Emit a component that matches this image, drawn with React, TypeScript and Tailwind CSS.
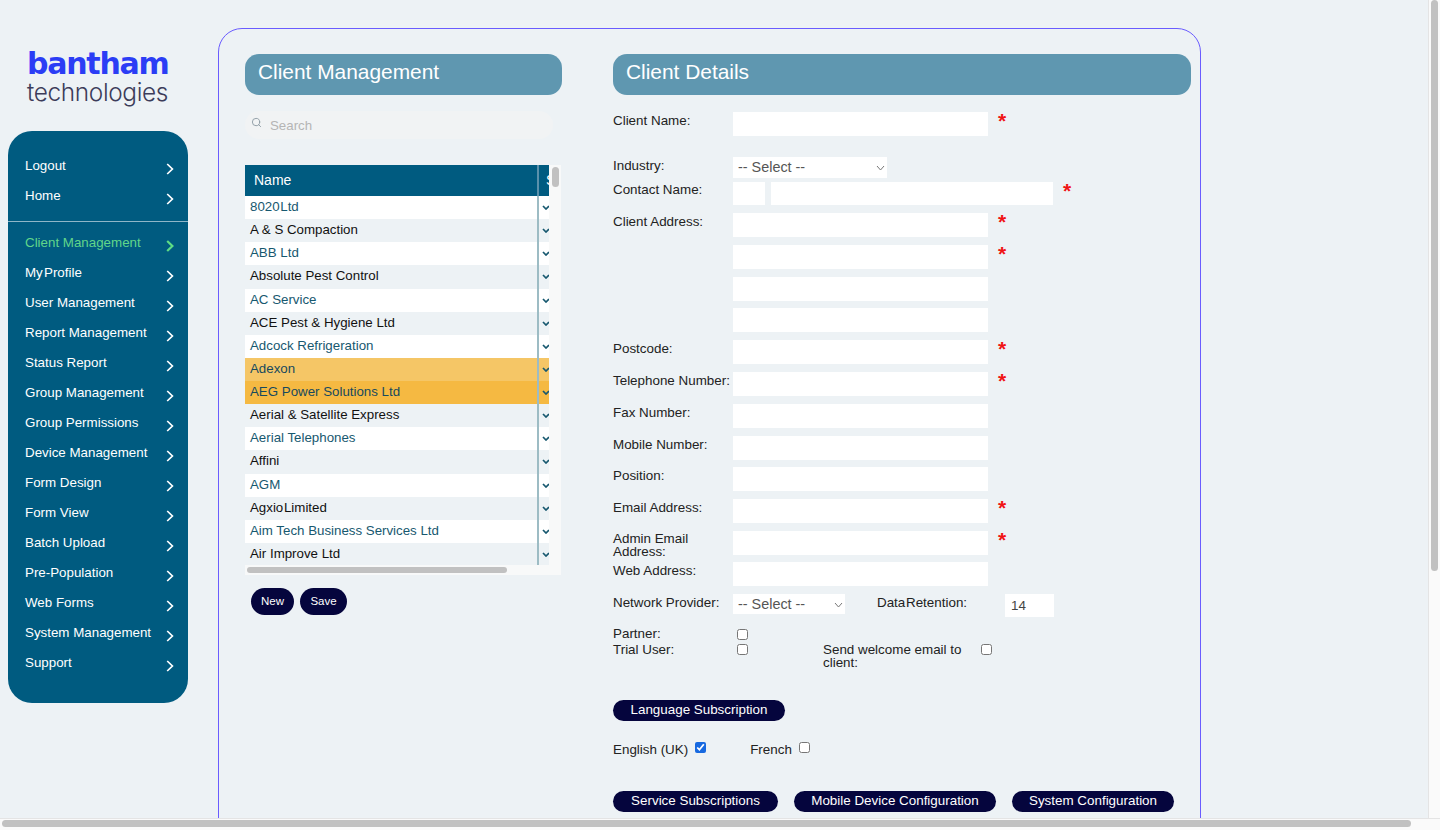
import React from "react";
import { Search } from "lucide-react";

const font = "font-['Liberation_Sans',Arial,sans-serif]";

const topNav = ["Logout", "Home"];
const nav = ["Client Management", "My Profile", "User Management", "Report Management", "Status Report", "Group Management", "Group Permissions", "Device Management", "Form Design", "Form View", "Batch Upload", "Pre-Population", "Web Forms", "System Management", "Support"];
const clients = ["8020 Ltd", "A & S Compaction", "ABB Ltd", "Absolute Pest Control", "AC Service", "ACE Pest & Hygiene Ltd", "Adcock Refrigeration", "Adexon", "AEG Power Solutions Ltd", "Aerial & Satellite Express", "Aerial Telephones", "Affini", "AGM", "Agxio Limited", "Aim Tech Business Services Ltd", "Air Improve Ltd"];

function Chevron({ green, top }: { green?: boolean; top?: boolean }) {
  return (
    <svg width="8" height="12" viewBox="0 0 8 12" fill="none" stroke={green ? "#5fdc84" : "#ffffff"} strokeWidth={green ? 2.2 : 1.7} className={`${top ? "mt-[5px]" : "mt-[3px]"} mr-[14px] shrink-0`}>
      <path d="M1.2 1 L6.4 6 L1.2 11" />
    </svg>
  );
}

function NavItem({ label, active, top }: { label: string; active?: boolean; top?: boolean }) {
  const tight = label === "My Profile";
  return (
    <div className={`flex h-[30px] items-center justify-between pl-[17px] text-[13.35px] ${active ? "text-[#61d68a]" : "text-white"} ${tight ? "[word-spacing:-2.5px]" : ""}`}>
      <span className={top ? "mt-[1px]" : "-mt-[2px]"}>{label}</span>
      <Chevron green={active} top={top} />
    </div>
  );
}

function Sidebar() {
  return (
    <aside className="w-[218px] shrink-0 pl-[8px]">
      <div className="mt-[49px] h-[56px] pl-[19px]">
        <div className="h-[30px] text-[30px] leading-[30px] font-bold tracking-[-1.25px] text-[#2b3df5] font-['DejaVu_Sans',sans-serif]">bantham</div>
        <div className="h-[26px] text-[24.4px] leading-[26px] font-light tracking-[-0.35px] text-[#3c3c5a] font-['Inter',sans-serif]">technologies</div>
      </div>
      <nav className="mt-[26px] h-[572px] w-[180px] rounded-[24px] bg-[#005b80] pt-[20px]">
        {topNav.map((n) => <NavItem key={n} label={n} top />)}
        <div className="mt-[10px] mb-[7px] h-px bg-[#8fb6c8]" />
        {nav.map((n, i) => <NavItem key={n} label={n} active={i === 0} />)}
      </nav>
    </aside>
  );
}

function Heading({ children, className }: { children: React.ReactNode; className: string }) {
  return (
    <div className={`flex h-[41px] items-center rounded-[14px] bg-[#5f97b0] pl-[13px] text-[20.9px] text-white ${className}`}>
      <span className="-mt-[5px]">{children}</span>
    </div>
  );
}

function ClientRow({ name, i }: { name: string; i: number }) {
  const bg = name === "Adexon" ? "bg-[#f5c666] text-[#17495e]" : name.startsWith("AEG") ? "bg-[#f5b942] text-[#17495e]" : i % 2 === 0 ? "bg-white text-[#17586f]" : "bg-[#edf2f5] text-[#111111]";
  const tight = name === "8020 Ltd" || name === "Agxio Limited";
  return (
    <div className={`flex h-[23.13px] text-[13.3px] ${bg}`}>
      <div className={`w-[292px] shrink-0 truncate pl-[5px] leading-[22px] ${tight ? "[word-spacing:-3px]" : ""}`}>{name}</div>
      <div className="w-[2px] shrink-0 bg-[#9dbcc4]" />
      <div className="flex flex-1 justify-end overflow-hidden pt-[9px]">
        <svg width="8" height="5" viewBox="0 0 8 5" fill="none" stroke="#17586f" strokeWidth="1.7" className="-mr-[1px] shrink-0"><path d="M1 1 L4 4 L7 1" /></svg>
      </div>
    </div>
  );
}

function ClientList() {
  return (
    <section className="w-[317px] shrink-0">
      <Heading className="w-[317px]">Client Management</Heading>
      <div className="mt-[16px] flex h-[28px] w-[308px] items-center rounded-full bg-[#f1f3f4] pl-[6px] text-[13.3px] text-[#b5b5b5]">
        <Search size={11} strokeWidth={2} className="-mt-[5px] text-[#8c9aa3]" />
        <span className="mt-[1px] ml-[8px]">Search</span>
      </div>
      <div className="mt-[26px] flex h-[410px] w-[316px] flex-col bg-[#f8f9f9]">
        <div className="flex flex-1 overflow-hidden">
          <div className="w-[304px] shrink-0">
            <div className="flex h-[31px] bg-[#005b80] text-[14px] text-white">
              <div className="w-[292px] shrink-0 pl-[9px] leading-[30px]">Name</div>
              <div className="w-[2px] shrink-0 bg-[#5b91ab]" />
              <div className="flex-1 overflow-hidden pl-[7px] leading-[30px]">S</div>
            </div>
            {clients.map((c, i) => <ClientRow key={c} name={c} i={i} />)}
          </div>
          <div className="ml-[3px] mt-[2px] h-[20px] w-[7px] rounded-full bg-[#c1c1c1]" />
        </div>
        <div className="mb-[2px] ml-[2px] mt-[2px] h-[6px] w-[260px] rounded-full bg-[#c1c1c1]" />
      </div>
      <div className="mt-[13px] flex gap-[6px] pl-[6px]">
        <button className="h-[27px] w-[43px] rounded-full bg-[#05053d] text-[11.5px] text-white">New</button>
        <button className="h-[27px] w-[47px] rounded-full bg-[#05053d] text-[11.5px] text-white">Save</button>
      </div>
    </section>
  );
}

function Star() {
  return <span className="ml-[10px] h-[24px] text-[21px] leading-[18px] font-bold text-[#f01414]">*</span>;
}

function Select({ className }: { className: string }) {
  return (
    <div className={`relative bg-white ${className}`}>
      <select className="h-full w-full appearance-none pl-[5px] text-[14.4px] text-[#555555] outline-none">
        <option>-- Select --</option>
      </select>
      <svg width="9" height="6" viewBox="0 0 9 6" fill="none" stroke="#777777" strokeWidth="1" className="pointer-events-none absolute top-[8px] right-[2px]"><path d="M1 1 L4.5 5 L8 1" /></svg>
    </div>
  );
}

function Field({ label, star, className }: { label?: string; star?: boolean; className: string }) {
  return (
    <div className={`flex h-[24px] text-[#222222] ${className}`}>
      <label className="w-[120px] shrink-0 leading-[17px] whitespace-nowrap">{label}</label>
      <input className="h-[24px] w-[255px] bg-white outline-none" />
      {star && <Star />}
    </div>
  );
}

function PillButton({ children, className }: { children: React.ReactNode; className: string }) {
  return <button className={`h-[21px] rounded-full bg-[#05053d] text-[13.4px] text-white ${className}`}>{children}</button>;
}

function Box({ checked, className }: { checked?: boolean; className?: string }) {
  return <input type="checkbox" defaultChecked={checked} className={`m-0 h-[11px] w-[11px] shrink-0 accent-[#1769e0] ${className ?? ""}`} />;
}

function ClientDetails() {
  return (
    <section className="ml-[51px] w-[578px] shrink-0 text-[13.4px] text-[#222222]">
      <Heading className="w-[578px]">Client Details</Heading>
      <Field label="Client Name:" star className="mt-[17px]" />
      <div className="mt-[21px] flex h-[21px]">
        <label className="w-[120px] shrink-0 leading-[17px]">Industry:</label>
        <Select className="h-[21px] w-[154px]" />
      </div>
      <div className="mt-[4px] flex h-[23px]">
        <label className="w-[120px] shrink-0 -mt-[1px] leading-[17px]">Contact Name:</label>
        <input className="h-[23px] w-[32px] bg-white outline-none" />
        <input className="ml-[6px] h-[23px] w-[282px] bg-white outline-none" />
        <Star />
      </div>
      <Field label="Client Address:" star className="mt-[8px]" />
      <Field star className="mt-[8px]" />
      <Field className="mt-[8px]" />
      <Field className="mt-[7px]" />
      <Field label="Postcode:" star className="mt-[8px]" />
      <Field label="Telephone Number:" star className="mt-[8px]" />
      <Field label="Fax Number:" className="mt-[8px]" />
      <Field label="Mobile Number:" className="mt-[8px]" />
      <Field label="Position:" className="mt-[7px]" />
      <Field label="Email Address:" star className="mt-[8px]" />
      <div className="mt-[8px] flex h-[24px]">
        <label className="w-[120px] shrink-0 mt-[1px] leading-[13px]">Admin Email<br />Address:</label>
        <input className="h-[24px] w-[255px] bg-white outline-none" />
        <Star />
      </div>
      <Field label="Web Address:" className="mt-[7px]" />
      <div className="mt-[8px] flex h-[23px]">
        <label className="w-[120px] shrink-0 leading-[17px]">Network Provider:</label>
        <Select className="h-[20px] w-[112px]" />
        <label className="ml-[32px] w-[128px] shrink-0 leading-[17px] [word-spacing:-3px]">Data Retention:</label>
        <input defaultValue="14" className="h-[23px] w-[49px] bg-white pl-[6px] text-[13.4px] text-[#444444] outline-none" />
      </div>
      <div className="mt-[10px] flex h-[14px] items-center">
        <label className="w-[124px] shrink-0">Partner:</label>
        <Box />
      </div>
      <div className="mt-[2px] flex h-[32px] items-start">
        <label className="w-[124px] shrink-0 leading-[13px]">Trial User:</label>
        <Box className="mt-[1px]" />
        <label className="ml-[75px] w-[158px] shrink-0 leading-[13px]">Send welcome email to client:</label>
        <Box className="mt-[1px]" />
      </div>
      <PillButton className="mt-[25px] block w-[172px]">Language Subscription</PillButton>
      <div className="mt-[21px] flex h-[16px] items-center">
        <span>English (UK)</span>
        <Box checked className="ml-[7px] -mt-[5px]" />
        <span className="ml-[44px]">French</span>
        <Box className="ml-[7px] -mt-[5px]" />
      </div>
      <div className="mt-[33px] flex gap-[16px]">
        <PillButton className="w-[165px]">Service Subscriptions</PillButton>
        <PillButton className="w-[202px]">Mobile Device Configuration</PillButton>
        <PillButton className="w-[162px]">System Configuration</PillButton>
      </div>
    </section>
  );
}

export default function App() {
  return (
    <div className={`relative flex h-[830px] w-[1440px] overflow-hidden bg-[#edf2f5] ${font}`}>
      <Sidebar />
      <main className="mt-[28px] flex h-[900px] w-[983px] shrink-0 rounded-t-[24px] border border-[#6a5cff] pt-[25px] pl-[26px]">
        <ClientList />
        <ClientDetails />
      </main>
      <div className="absolute top-0 right-0 h-[830px] w-[12px] border-l border-[#e4e4e4] bg-[#fafafa] pl-[2px]">
        <div className="h-[571px] w-[7px] rounded-full bg-[#c1c1c1]" />
      </div>
      <div className="absolute bottom-0 left-0 h-[12px] w-[1440px] border-t border-[#e4e4e4] bg-[#fafafa] pt-[1px] pl-[2px]">
        <div className="h-[7px] w-[1409px] rounded-full bg-[#c1c1c1]" />
      </div>
    </div>
  );
}
